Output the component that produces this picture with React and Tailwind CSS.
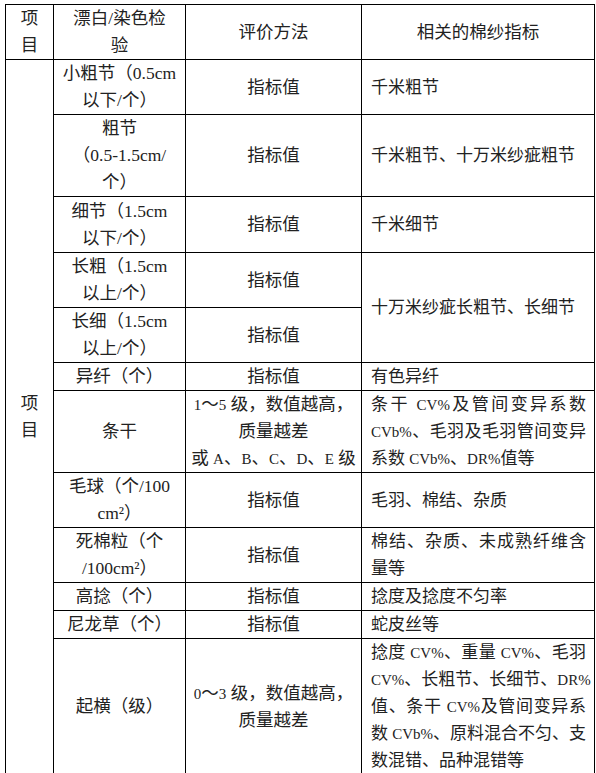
import React from "react";

const cell = "border border-black align-middle leading-[27px] p-0";
const center = cell + " text-center";
const left = cell + " text-left pl-[9px] pr-[8px] text-[17px]";

// latin runs (CV%, DR%, A, B ...) are set smaller than the CJK text, as in the source doc
const fmt = (t) =>
  t.split(/([A-Za-z0-9%]+)/).map((part, i) =>
    i % 2 === 1 ? (
      <span key={i} className="text-[15px] leading-none">
        {part}
      </span>
    ) : (
      part
    )
  );

// one line spread edge to edge, like the justified lines in the source
const J = ({ children }) => (
  <div className="h-[27px] whitespace-nowrap [text-align-last:justify]">{fmt(children)}</div>
);
const L = ({ children, small }) => (
  <div className="h-[27px] whitespace-nowrap">{small ? fmt(children) : children}</div>
);

const rows = [
  { h: "h-[55px]", name: ["小粗节（0.5cm", "以下/个）"], method: ["指标值"], idx: "千米粗节" },
  { h: "h-[82px]", name: ["粗节", "（0.5-1.5cm/", "个）"], method: ["指标值"], idx: "千米粗节、十万米纱疵粗节" },
  { h: "h-[56px]", name: ["细节（1.5cm", "以下/个）"], method: ["指标值"], idx: "千米细节" },
  { h: "h-[55px]", name: ["长粗（1.5cm", "以上/个）"], method: ["指标值"], idx: "十万米纱疵长粗节、长细节", span: 2 },
  { h: "h-[55px]", name: ["长细（1.5cm", "以上/个）"], method: ["指标值"], skip: true },
  { h: "h-[27px]", name: ["异纤（个）"], method: ["指标值"], idx: "有色异纤" },
  {
    h: "h-[81px]",
    name: ["条干"],
    method: ["1～5 级，数值越高，", "质量越差", "或 A、B、C、D、E 级"],
    lines: ["条干 CV%及管间变异系数", "CVb%、毛羽及毛羽管间变异", "系数 CVb%、DR%值等"],
  },
  { h: "h-[55px]", name: ["毛球（个/100", "cm²）"], method: ["指标值"], idx: "毛羽、棉结、杂质" },
  {
    h: "h-[55px]",
    name: ["死棉粒（个", "/100cm²）"],
    method: ["指标值"],
    lines: ["棉结、杂质、未成熟纤维含", "量等"],
  },
  { h: "h-[28px]", name: ["高捻（个）"], method: ["指标值"], idx: "捻度及捻度不匀率" },
  { h: "h-[28px]", name: ["尼龙草（个）"], method: ["指标值"], idx: "蛇皮丝等" },
  {
    h: "h-[136px]",
    name: ["起横（级）"],
    method: ["0～3 级，数值越高，", "质量越差"],
    lines: [
      "捻度 CV%、重量 CV%、毛羽",
      "CV%、长粗节、长细节、DR%",
      "值、条干 CV%及管间变异系",
      "数 CVb%、原料混合不匀、支",
      "数混错、品种混错等",
    ],
  },
];

export default function App() {
  return (
    <div className="w-[596px] h-[773px] bg-white pt-[4px] pl-[5px] font-['Liberation_Serif','Noto_Sans_CJK_SC',serif] text-[17.5px] text-[#222]">
      <table className="table-fixed border-collapse w-[589px]">
        <colgroup>
          <col className="w-[48px]" />
          <col className="w-[132px]" />
          <col className="w-[176px]" />
          <col className="w-[233px]" />
        </colgroup>
        <tbody>
          <tr className="h-[54px]">
            <td className={center}>
              <L>项</L>
              <L>目</L>
            </td>
            <td className={center}>
              <L>漂白/染色检</L>
              <L>验</L>
            </td>
            <td className={center}>
              <L>评价方法</L>
            </td>
            <td className={center}>
              <L>相关的棉纱指标</L>
            </td>
          </tr>
          {rows.map((r, i) => (
            <tr key={i} className={r.h}>
              {i === 0 && (
                <td rowSpan={rows.length} className={center}>
                  <L>项</L>
                  <L>目</L>
                </td>
              )}
              <td className={center}>
                {r.name.map((t, k) => (
                  <L key={k}>{t}</L>
                ))}
              </td>
              <td className={center}>
                {r.method.map((t, k) => (
                  <L key={k} small>
                    {t}
                  </L>
                ))}
              </td>
              {!r.skip && (
                <td rowSpan={r.span || 1} className={left}>
                  {r.lines
                    ? r.lines.map((t, k) =>
                        k < r.lines.length - 1 ? (
                          <J key={k}>{t}</J>
                        ) : (
                          <L key={k} small>
                            {t}
                          </L>
                        )
                      )
                    : <L>{r.idx}</L>}
                </td>
              )}
            </tr>
          ))}
        </tbody>
      </table>
    </div>
  );
}
